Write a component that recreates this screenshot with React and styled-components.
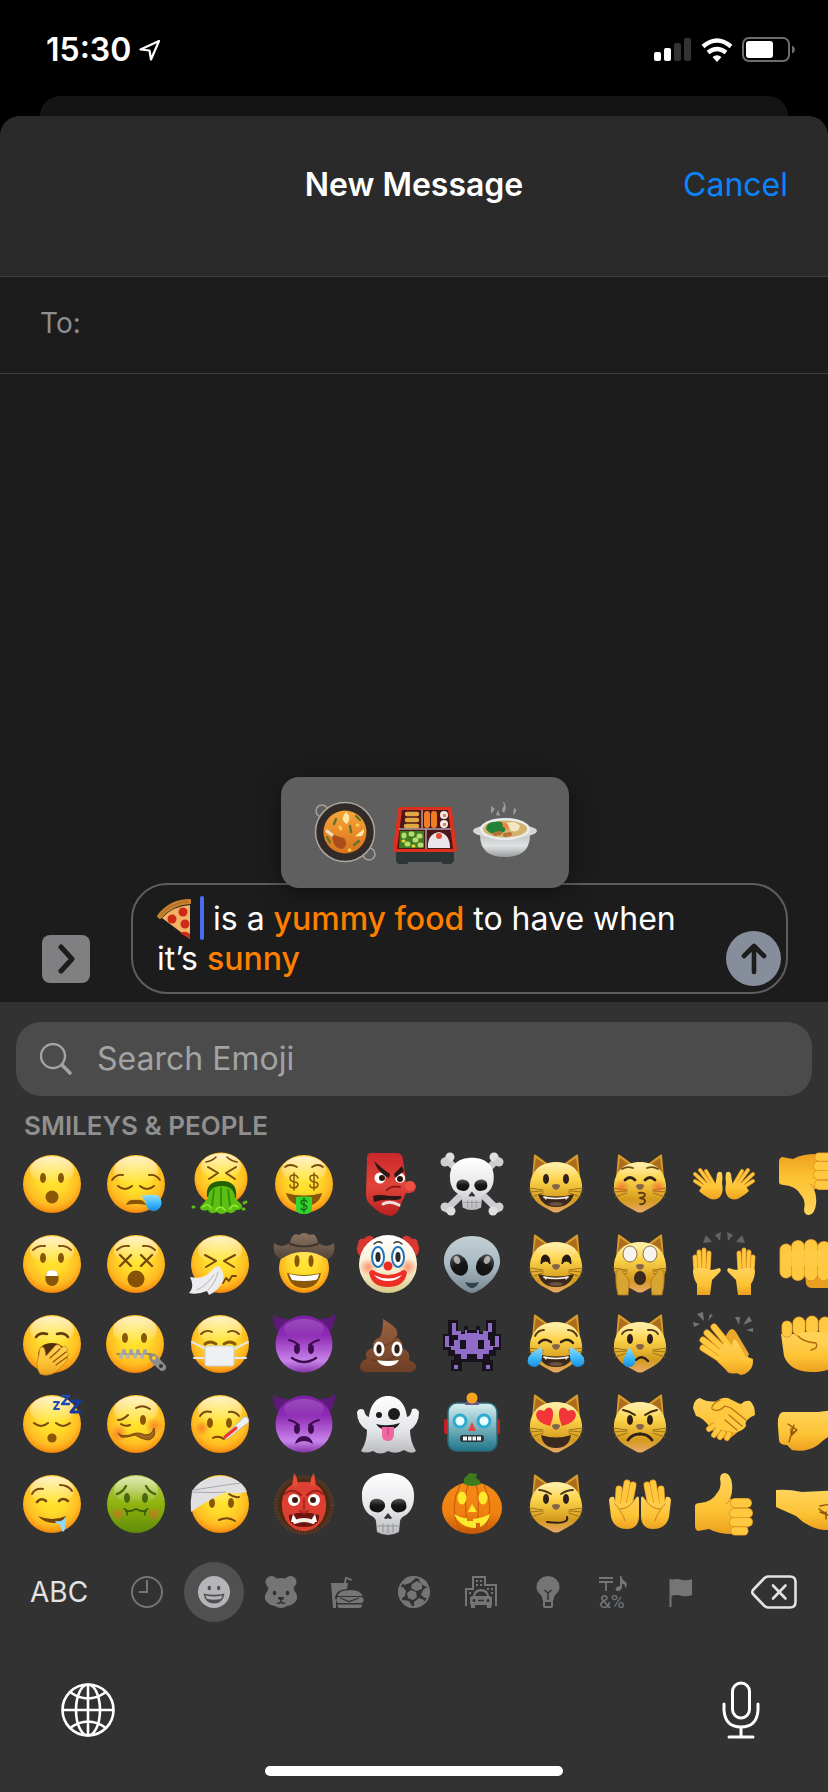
import { useState } from "react";
import styled, { createGlobalStyle } from "styled-components";

/*
  * Estilos globales
*/
const GlobalStyle = createGlobalStyle`
  :root {
    --sheet-color: #1c1c1c;
    --bar-color: #2a2a2a;
    --keyboard-color: #323232;
    --line-color: #3f3f41;
    --muted-color: #757575;
    --blue-color: #0a84ff;
    --orange-color: #ff8000;
    --main-font: Inter, "Liberation Sans", sans-serif;
  }

  * {
    box-sizing: border-box;
  }

  body {
    margin: 0;
    background-color: #000;
    font-family: var(--main-font);
    color: #fff;
  }

  button, input {
    font-family: inherit;
    border: none;
    background: none;
    padding: 0;
    margin: 0;
    color: inherit;
  }

  svg {
    display: block;
  }
`;

/*
  * Trazos compartidos de los emojis
*/
const ink = "#77480b";

const Line = ({ d, w = 2, c = ink }) => (
  <path d={d} fill="none" stroke={c} strokeWidth={w} strokeLinecap="round" strokeLinejoin="round" />
);

const Mirror = ({ children }) => (
  <>
    {children}
    <g transform="matrix(-1 0 0 1 64 0)">{children}</g>
  </>
);

// Dedo o brazo: un trazo grueso con un borde más oscuro
const Limb = ({ d, w = 6 }) => (
  <>
    <Line d={d} w={w} c="#dd9220" />
    <Line d={d} w={w - 1.4} c="#ffc93f" />
  </>
);

const Face = ({ fill = "url(#yellow)", cx = 32, cy = 32, r = 29, shine = 0.8 }) => (
  <>
    <circle cx={cx} cy={cy} r={r} fill={fill} />
    <ellipse cx={cx} cy={cy - r * 0.48} rx={r * 0.76} ry={r * 0.48} fill="url(#shine)" opacity={shine} />
  </>
);

const Eyes = ({ a = 23, b = 41, y = 26, rx = 3, ry = 5, c = "#8a5708" }) => (
  <>
    <ellipse cx={a} cy={y} rx={rx} ry={ry} fill={c} />
    <ellipse cx={b} cy={y} rx={rx} ry={ry} fill={c} />
  </>
);

const Brows = ({ y = 16 }) => (
  <Mirror>
    <Line d={`M13 ${y + 3} Q18 ${y - 2} 25 ${y - 1}`} w={1.8} />
  </Mirror>
);

const Squint = ({ y = 30 }) => (
  <Mirror>
    <Line d={`M17 ${y - 6} L28 ${y} L18 ${y + 6}`} />
  </Mirror>
);

const ClosedEyes = ({ y = 31 }) => (
  <Mirror>
    <Line d={`M14 ${y} Q21 ${y + 6} 28 ${y}`} />
  </Mirror>
);

const Tear = ({ x, y }) => (
  <path d={`M${x} ${y} C${x + 5} ${y + 7} ${x + 7} ${y + 12} ${x + 6} ${y + 16} A6.5 6.5 0 0 1 ${x - 6} ${y + 16} C${x - 6} ${y + 11} ${x - 2} ${y + 6} ${x} ${y}Z`} fill="url(#water)" />
);

const Cat = ({ children }) => (
  <>
    <Mirror>
      <path d="M8 27 L10 3 Q10 2 12 3 L27 14Z" fill="#d69b2b" />
      <path d="M10 20 L12 6 L22 13Z" fill="#ad6b1c" />
    </Mirror>
    <path d="M32 10 C47 10 57 19 58 33 C59 43 52 51 44 55 L35 60 Q32 61 29 60 L20 55 C12 51 5 43 6 33 C7 19 17 10 32 10Z" fill="url(#cat)" />
    <ellipse cx="32" cy="19" rx="20" ry="8" fill="url(#shine)" opacity="0.35" />
    <Mirror>
      <Line d="M5 36 L19 38 M5 40 L19 39 M7 45 L19 41" w={0.8} c="#8d6514" />
    </Mirror>
    {children}
    <path d="M28 33 Q32 31 36 33 Q36 37 32 38 Q28 37 28 33Z" fill="#86654a" />
  </>
);

const CatGrin = () => (
  <>
    <path d="M14 42 Q32 47 50 42 Q46 55 32 55 Q18 55 14 42Z" fill="#3b281e" />
    <path d="M19 44.5 L23 45.5 L22 48Z M45 44.5 L41 45.5 L42 48Z" fill="#fff" />
    <Line d="M20 45 Q32 48 44 45" w={1.6} c="#fff3e4" />
    <path d="M24 52 Q32 48 40 52 Q32 56 24 52Z" fill="#6d5145" />
  </>
);

const Imp = ({ children }) => (
  <>
    <Mirror>
      <path d="M1 1 Q2 7 13 6 L18 10 L8 22 Q0 14 1 1Z" fill="#5d1a78" />
    </Mirror>
    <circle cx="32" cy="32" r="28.5" fill="url(#purple)" />
    <ellipse cx="32" cy="17" rx="20" ry="10" fill="url(#shine)" opacity="0.2" />
    <Eyes a={25} b={39} y={37} c="#3c0b50" />
    <Mirror>
      <Line d="M17 28 Q22 29 27 33" w={1.8} c="#3c0b50" />
    </Mirror>
    {children}
  </>
);

const Skull = () => (
  <>
    <path d="M32 1 C49 1 59 11 58 25 C58 33 55 39 50 43 Q45 45 44 49 L43 60 Q32 66 21 60 L20 49 Q19 45 14 43 C9 39 6 33 6 25 C5 11 15 1 32 1Z" fill="url(#bone)" />
    <Mirror>
      <path d="M14 31 Q16 26 23 27 Q30 29 29 35 Q26 42 19 40 Q12 39 14 31Z" fill="url(#hole)" />
    </Mirror>
    <path d="M32 41 L36 46 Q34 48 32 46 Q30 48 28 46Z" fill="#333" />
    <Line d="M22 54 H42 M27 52 V60 M32 52 V61 M37 52 V60" w={1} c="#929396" />
  </>
);

const Rays = () => (
  <path d="M11 11 L14 3 L20 10Z M23 3 L29 0 L28 9Z M41 3 L35 0 L36 9Z M53 11 L50 3 L44 10Z" fill="#646464" />
);

const ThumbUp = () => (
  <>
    <path d="M3 34 Q3 31 8 31 Q20 30 25 21 Q30 15 28 7 Q28 1 33 1 Q39 2 40 12 Q41 20 38 27 L52 28 L56 58 L40 62 Q26 62 17 57 L6 59 Q3 58 3 54 Z" fill="url(#hand)" />
    <Limb d="M43 31 H55" w={10} />
    <Limb d="M42 41 H56" w={10} />
    <Limb d="M42 50 H56" w={10} />
    <Limb d="M43 59 H52" w={9} />
    <Line d="M38 27 Q37 31 34 32" w={1} c="#d8901f" />
  </>
);

/*
  * Dibujos
*/
const drawings = {
  "hushed face": (
    <>
      <Face />
      <Eyes />
      <circle cx="32" cy="45" r="6.5" fill="#8a5708" />
    </>
  ),
  "astonished face": (
    <>
      <Face />
      <Brows y={15} />
      <Eyes />
      <rect x="25.5" y="38" width="13" height="16" rx="6.5" fill="#8a5708" />
      <path d="M26 44 Q26 38 32 38 Q38 38 38 44Z" fill="#fff" />
    </>
  ),
  "yawning face": (
    <>
      <Face />
      <Mirror>
        <Line d="M16 25 Q20 20 27 22" w={2.6} c="#643d0b" />
      </Mirror>
      <path d="M18 45 Q18 31 32 31 Q45 31 45 43 L36 55 L20 53Z" fill="#51310c" />
      <path d="M20 62 Q15 53 18 47 L20 36 Q24 33 25 39 L26 44 L36 33 Q41 32 41 36 L45 34 Q49 36 47 40 Q50 42 47 45 Q49 48 45 51 L36 60 Q28 65 20 62Z" fill="url(#hand)" stroke="#c47d16" strokeWidth="0.8" />
      <Line d="M30 46 L40 37 M33 50 L46 40 M36 53 L47 45" w={1.2} c="#8f530d" />
    </>
  ),
  "sleeping face": (
    <>
      <Face />
      <ClosedEyes y={31} />
      <circle cx="32" cy="46" r="4.6" fill="#8a5708" />
      <Line d="M34 10 H39 L34 17 H39" w={2} c="#1d49b8" />
      <Line d="M42 4 H49 L42 12 H49" w={2.4} c="#1d49b8" />
      <Line d="M51 9 H60 L51 20 H60" w={3} c="#1639a4" />
    </>
  ),
  "drooling face": (
    <>
      <Face />
      <Line d="M12 22 Q15 16 23 17 M40 13 Q48 13 52 19" />
      <Line d="M17 30 Q21 25 26 29 M39 29 Q43 25 48 29" w={2.6} />
      <path d="M18 44 Q32 50 46 44 Q44 51 34 51 Q24 51 18 44Z" fill="#74440a" />
      <path d="M35 49 Q44 50 45 45 Q46 51 45 57 Q43 63 41 56 L40 52 L37 52Z" fill="#8ddcff" />
    </>
  ),
  "sleepy face": (
    <>
      <Face />
      <Mirror>
        <Line d="M8 28 Q12 22 19 23" w={1.8} />
      </Mirror>
      <ClosedEyes y={34} />
      <path d="M22 53 Q24 47 32 48 Q40 47 42 53 Q32 51 22 53Z" fill="#8a5708" />
      <path d="M37 44 Q46 42 53 43 Q59 47 57 54 Q54 60 48 59 Q42 57 42 51 Q41 47 37 44Z" fill="url(#water)" />
    </>
  ),
  "dizzy face": (
    <>
      <Face />
      <Brows y={15} />
      <Mirror>
        <Line d="M16 23 L27 34 M27 23 L16 34" w={2.4} />
      </Mirror>
      <circle cx="32" cy="47" r="8.5" fill="#855208" />
    </>
  ),
  "zipper-mouth face": (
    <>
      <Face cx={31} />
      <Eyes a={21} b={40} />
      <Line d="M13 42 H47" w={1.4} c="#7c6d53" />
      <Line d="M17 45 V43 M24 45 V43 M31 45 V43 M38 45 V43" w={4} c="#b3b3b3" />
      <Line d="M20 39 V41 M27 39 V41 M34 39 V41 M41 39 V41" w={4} c="#a2a2a2" />
      <path d="M45 43 Q50 39 54 45 L62 54 Q63 59 57 59 L49 52 Q44 47 45 43Z" fill="#8d8d8d" />
      <circle cx="50" cy="46" r="2" fill="#ffc91f" />
      <circle cx="57" cy="54" r="2" fill="#333" />
    </>
  ),
  "woozy face": (
    <>
      <Face />
      <circle cx="15" cy="41" r="9" fill="url(#blush)" />
      <circle cx="50" cy="34" r="9" fill="url(#blush)" />
      <Line d="M14 28 Q19 28 24 23 M32 16 Q39 12 46 17 M17 32 Q21 35 26 33" />
      <ellipse cx="39" cy="28" rx="3" ry="5" fill="#8a5708" />
      <path d="M14 41 Q17 45 26 43 Q34 39 41 43 Q48 43 50 36 Q53 46 44 48 Q37 47 31 43 Q22 46 17 45Z" fill="#a5651a" stroke={ink} />
    </>
  ),
  "nauseated face": (
    <>
      <Face fill="url(#green)" shine={0.6} />
      <circle cx="14" cy="42" r="7" fill="url(#blush)" />
      <circle cx="50" cy="42" r="7" fill="url(#blush)" />
      <Mirror>
        <Line d="M13 22 Q19 20 22 14" c="#4b6a0c" w={2.4} />
        <Line d="M20 37 Q24 37 23 43" c="#3d5a0a" w={1.6} />
      </Mirror>
      <Eyes y={26} c="#47680c" />
      <Line d="M22 39 Q27 40 32 37 Q37 40 42 39" c="#3d5a0a" w={2} />
    </>
  ),
  "vomiting face": (
    <>
      <Face cx={33} cy={27} r={26.5} />
      <Line d="M18 10 Q24 9 28 5 M39 5 Q43 9 49 10" w={1.6} />
      <Line d="M20 15 L30 21 L21 27 M48 15 L38 21 L47 27" />
      <path d="M19 45 Q17 29 34 29 Q50 29 48 46Z" fill="#226105" />
      <path d="M20 46 Q21 34 34 34 Q46 34 47 46 L54 53 Q55 58 48 58 Q45 63 39 60 Q33 64 29 60 Q22 63 20 58 Q12 60 12 55Z" fill="#5cbf12" />
      <Line d="M26 38 L24 53 M33 36 V55 M40 38 L42 53" w={2} c="#379208" />
      <Line d="M15 55 Q20 50 23 56 M28 58 Q32 52 37 58 M42 57 Q45 51 50 55" w={1.6} c="#93ec2d" />
      <Line d="M5 55 L6 55 M56 51 L58 50 M55 57 H56" w={3} c="#5cbf12" />
    </>
  ),
  "sneezing face": (
    <>
      <Face />
      <Squint y={29} />
      <Line d="M35 51 L38 46 L41 49 L44 44 L48 44" w={1.8} />
      <path d="M1 61 Q7 55 2 45 Q15 48 22 40 Q28 33 31 34 Q37 40 35 49 Q30 59 21 63 L19 59 Q9 63 1 61Z" fill="#ececee" />
      <Line d="M9 58 Q18 54 26 43 M20 58 Q28 50 30 40" w={1} c="#b4b4b8" />
    </>
  ),
  "face with medical mask": (
    <>
      <Face />
      <Mirror>
        <Line d="M13 22 Q18 17 24 20" w={1.8} />
        <Line d="M17 32 Q22 28 28 32" w={3} c="#8a5708" />
        <Line d="M18 37 L4 30 M18 46 L6 46" w={2} c="#e4e6ea" />
      </Mirror>
      <rect x="17" y="34" width="29" height="20" rx="2" fill="#eef0f4" stroke="#c9ccd2" />
    </>
  ),
  "face with thermometer": (
    <>
      <Face />
      <circle cx="14" cy="36" r="8" fill="url(#blush)" />
      <Line d="M12 24 Q16 18 23 20 M41 20 Q47 19 51 24" />
      <Eyes a={22} b={41} y={31} />
      <Line d="M25 46 Q30 43 36 47" />
      <path d="M35 45 L56 25 Q60 24 61 29 Q60 32 57 33 L39 47Z" fill="#eef0f3" stroke="#aeb1b6" strokeWidth="0.8" />
      <Line d="M37 45 L48 36" w={3} c="#f1342c" />
    </>
  ),
  "face with head-bandage": (
    <>
      <Face />
      <Line d="M41 22 Q46 26 51 25" />
      <Eyes a={24} b={43} y={31} />
      <Line d="M31 48 Q40 44 47 49" />
      <path d="M4 19 Q12 7 26 5 Q36 3 46 7 Q56 11 59 20 Q49 22 38 20 Q20 28 3 40 Q2 30 4 19Z" fill="#e0e0e2" />
      <path d="M6 18 Q30 14 52 11 M4 20 Q25 21 38 20" stroke="#a9a9ad" fill="none" />
    </>
  ),
  "money-mouth face": (
    <>
      <Face />
      <Line d="M13 15 Q18 11 25 15 M40 15 Q46 11 51 15" w={1.8} />
      <Line d="M26 26 Q25 23 22 23 Q18 23 18 26 Q18 29 22 30 Q26 30 26 33 Q25 36 22 36 Q18 36 18 33 M22 21 V38" w={1.5} c="#8a5708" />
      <Line d="M46 26 Q45 23 42 23 Q38 23 38 26 Q38 29 42 30 Q46 30 46 33 Q45 36 42 36 Q38 36 38 33 M42 21 V38" w={1.5} c="#8a5708" />
      <path d="M14 41 Q32 46 50 41 Q47 54 32 54 Q18 54 14 41Z" fill="#8a5708" />
      <path d="M24 45 Q32 44 40 45 V57 Q40 62 32 62 Q24 62 24 57Z" fill="#34d52e" />
      <Line d="M35 50 Q34 48 32 48 Q29 48 29 51 Q29 52 32 53 Q35 53 35 56 Q34 58 32 58 Q29 58 29 56 M32 46 V60" w={1.3} c="#116b10" />
    </>
  ),
  "cowboy hat face": (
    <>
      <Face cy={36} r={25} shine={0.3} />
      <path d="M2 11 Q9 17 18 11 Q20 0 27 3 Q32 -1 38 3 Q44 0 46 11 Q55 17 62 11 Q64 25 55 27 Q43 19 32 20 Q21 19 9 27 Q0 24 2 11Z" fill="url(#hat)" />
      <Line d="M18 12 Q32 17 46 12" w={2} c="#40352a" />
      <Eyes a={25} b={39} y={29} rx={2.6} ry={6} />
      <path d="M15 41 Q32 45 49 41 Q46 56 32 56 Q18 56 15 41Z" fill="#8a5708" />
      <path d="M17 42 Q32 46 47 42 Q46 47 44 48 Q32 50 20 48Z" fill="#fff" />
    </>
  ),
  "smiling face with horns": (
    <Imp>
      <Line d="M20 46 Q32 54 44 46" w={2.4} c="#3c0b50" />
    </Imp>
  ),
  "angry face with horns": (
    <Imp>
      <path d="M23 52 Q25 44 32 44 Q39 44 41 52 Q32 46 23 52Z" fill="#3c0b50" />
    </Imp>
  ),
  ogre: (
    <>
      <circle cx="32" cy="33" r="28" fill="#4a2a17" stroke="#5a3823" strokeWidth="4" strokeDasharray="2 1" />
      <path d="M32 10 C46 9 55 20 54 35 C53 50 43 59 32 59 C21 59 11 50 10 35 C9 20 18 9 32 10Z" fill="#dd3f31" />
      <Mirror>
        <path d="M20 14 L22 1 Q26 6 26 14Z" fill="#e54c3a" />
        <circle cx="22" cy="28" r="6" fill="#fff" />
        <circle cx="23" cy="28" r="3" fill="#3a1c10" />
        <Line d="M13 22 Q20 15 29 23" w={2} c="#982018" />
      </Mirror>
      <path d="M17 43 Q32 38 47 43 Q48 55 32 55 Q16 55 17 43Z" fill="#6d140f" />
      <Line d="M23 50 Q32 46 41 50" w={4} c="#f6eee4" />
      <path d="M19 50 L21 42 L26 50Z M45 50 L43 42 L38 50Z" fill="#fff" />
      <Line d="M28 39 Q32 42 36 39 M32 27 V37" w={2.4} c="#b02a22" />
    </>
  ),
  goblin: (
    <>
      <path d="M11 5 Q12 0 18 1 L40 1 Q47 1 47 8 L50 30 Q59 27 60 35 Q59 42 50 41 L44 54 Q42 62 35 64 Q24 63 16 54 Q10 50 10 42Z" fill="url(#red)" />
      <circle cx="24" cy="26" r="5.5" fill="#fff" />
      <circle cx="44" cy="26" r="5" fill="#fff" />
      <circle cx="26" cy="26" r="3" fill="#2b140c" />
      <circle cx="44" cy="27" r="3" fill="#2b140c" />
      <path d="M18 9 Q24 15 34 22 L33 26 Q22 21 18 9Z M38 22 L46 14 L48 19 L39 26Z" fill="#2a1816" />
      <path d="M17 44 Q24 42 33 44 L45 44 Q47 48 38 48 Q26 47 18 50Z" fill="#2a1816" />
      <Line d="M27 52 Q34 48 43 53" w={3} c="#f3dfd8" />
      <ellipse cx="54" cy="34" rx="5" ry="5" fill="#ec5045" />
      <Line d="M31 38 Q36 33 44 35" w={2} c="#8f1a18" />
    </>
  ),
  clown: (
    <>
      <Mirror>
        <path d="M4 24 Q-1 19 2 12 Q2 6 8 7 Q13 1 18 6 L10 22Z" fill="#d93732" />
      </Mirror>
      <circle cx="32" cy="32" r="29" fill="url(#cream)" />
      <circle cx="12" cy="35" r="9" fill="url(#blush)" />
      <circle cx="52" cy="35" r="9" fill="url(#blush)" />
      <Mirror>
        <ellipse cx="22" cy="25" rx="6" ry="10" fill="#fff" stroke="#1d74bd" strokeWidth="2" />
        <ellipse cx="22" cy="25" rx="2.6" ry="5" fill="#2b2b2b" />
        <Line d="M18 12 Q22 8 26 11" w={1.4} c="#333" />
      </Mirror>
      <path d="M13 40 Q16 36 20 40 Q32 46 44 40 Q48 36 51 40 Q49 55 32 55 Q15 55 13 40Z" fill="#ed2f26" />
      <path d="M18 43 Q32 50 46 43 Q41 49 32 49 Q23 49 18 43Z" fill="#fff" />
      <circle cx="32" cy="34" r="4.5" fill="#eb2c23" />
    </>
  ),
  "pile of poo": (
    <>
      <path d="M27 7 Q37 13 40 17 Q43 22 40 25 Q48 29 46 36 Q55 39 53 48 Q61 51 60 56 Q58 61 50 60 H14 Q4 61 4 55 Q4 49 11 47 Q7 39 17 36 Q15 29 24 25 Q27 20 27 7Z" fill="url(#brown)" />
      <Line d="M20 34 Q34 35 41 25 M16 48 Q38 51 47 38" w={1.2} c="#623923" />
      <Mirror>
        <ellipse cx="23" cy="37" rx="5.5" ry="7.5" fill="#fff" />
        <ellipse cx="23" cy="37" rx="2.6" ry="4.5" fill="#2d1d15" />
      </Mirror>
      <path d="M21 48 Q32 50 43 48 Q40 54 32 54 Q24 54 21 48Z" fill="#fff" />
    </>
  ),
  ghost: (
    <>
      <path d="M32 4 C44 4 50 14 51 25 Q55 24 56 17 Q61 15 63 20 Q63 32 54 38 Q54 49 60 59 Q56 63 48 58 Q40 63 32 59 Q24 64 17 59 Q9 62 5 59 Q11 50 11 38 Q1 32 1 20 Q3 15 8 18 Q9 24 13 25 C14 14 20 4 32 4Z" fill="url(#bone)" />
      <circle cx="23" cy="23" r="3" fill="#1d1d1d" />
      <circle cx="38" cy="22" r="6" fill="#1d1d1d" />
      <path d="M20 32 Q32 35 44 31 Q40 38 32 38 Q24 38 20 32Z" fill="#1d1d1d" />
      <path d="M26 35 H38 V43 Q37 49 32 49 Q26 49 26 43Z" fill="#ef66a0" />
      <Line d="M32 36 V43" w={1} c="#c23b77" />
    </>
  ),
  skull: <Skull />,
  "skull and crossbones": (
    <>
      <Line d="M7 8 L57 57 M57 8 L7 57" w={7} c="#cbcccf" />
      <Mirror>
        <circle cx="10" cy="5" r="4.5" fill="#dedfe2" />
        <circle cx="5" cy="10" r="4.5" fill="#cfd0d3" />
        <circle cx="5" cy="55" r="4.5" fill="#cfd0d3" />
        <circle cx="11" cy="59" r="4.5" fill="#dedfe2" />
      </Mirror>
      <g transform="translate(5 5) scale(0.84)">
        <Skull />
      </g>
    </>
  ),
  alien: (
    <>
      <path d="M32 4 C49 4 61 16 60 31 C58 46 43 57 36 60 Q32 62 28 60 C21 57 6 46 4 31 C3 16 15 4 32 4Z" fill="url(#alien)" />
      <Mirror>
        <ellipse cx="19" cy="33" rx="8.5" ry="11" fill="url(#hole)" transform="rotate(-25 19 33)" />
        <ellipse cx="17" cy="28" rx="3" ry="4" fill="#fff" opacity="0.6" transform="rotate(-25 17 28)" />
      </Mirror>
      <path d="M25 50 Q32 52 39 50 Q36 56 32 56 Q28 56 25 50Z" fill="#30414a" />
    </>
  ),
  "alien monster": (
    <g shapeRendering="crispEdges">
      <path d="M8 8 H18 V20 H24 V14 H28 V18 H36 V14 H40 V20 H46 V8 H56 V22 H61 V38 H56 V44 H50 V48 H53 V59 H42 V50 H22 V59 H11 V48 H14 V44 H8 V38 H3 V22 H8Z" fill="#17121c" />
      <path d="M12 11 H16 V19 H21 V22 H25 V18 H27 V21 H37 V18 H39 V22 H43 V19 H48 V11 H52 V20 H48 V28 H50 V34 H55 V24 H59 V35 H53 V38 H49 V42 H43 V47 H37 V42 H27 V47 H21 V42 H15 V38 H11 V35 H5 V24 H9 V34 H14 V28 H18 V23 H12Z" fill="#8f6cc8" />
      <path d="M20 28 H26 V37 H20Z M38 28 H44 V37 H38Z" fill="#17121c" />
      <path d="M14 53 H18 V57 H14Z M46 53 H50 V57 H46Z" fill="#8f6cc8" />
    </g>
  ),
  robot: (
    <>
      <rect x="4" y="27" width="56" height="15" rx="2" fill="#c81f25" />
      <rect x="8" y="11" width="49" height="48" rx="9" fill="url(#steel)" stroke="#2a6b7a" strokeWidth="1.5" />
      <path d="M25 13 Q25 8 32 8 Q39 8 39 13Z" fill="#6a568e" />
      <circle cx="32" cy="6" r="5.5" fill="#f8a319" />
      <Mirror>
        <circle cx="20" cy="29" r="6" fill="#e9ffff" stroke="#2cabd3" strokeWidth="3" />
      </Mirror>
      <path d="M32 30 L36 39 H28Z" fill="#e3483e" />
      <rect x="20" y="43" width="24" height="7" rx="3" fill="#29333a" />
      <path d="M23 44.5 H27 V48.5 H23Z M28 44.5 H31.500 V48.5 H28Z M32.500 44.5 H36 V48.5 H32.500Z M37 44.5 H41 V48.5 H37Z" fill="#f4f7f8" />
    </>
  ),
  "jack-o-lantern": (
    <>
      <ellipse cx="32" cy="36" rx="30" ry="26" fill="url(#pumpkin)" />
      <Line d="M20 13 Q8 36 20 59 M44 13 Q56 36 44 59 M28 12 Q23 26 28 60 M36 12 Q41 26 36 60" w={1} c="#c0590a" />
      <path d="M24 12 Q23 5 27 4 L29 1 L37 2 L36 6 Q40 8 41 12 Q32 16 24 12Z" fill="#3f7c1e" />
      <Eyes a={22} b={43} y={26} rx={4.5} ry={6.5} c="#ffe92e" />
      <path d="M32 32 L37 40 H28Z" fill="#ffe92e" />
      <path d="M14 42 Q23 47 27 46 V49 H33 V47 Q43 46 50 42 Q48 51 40 55 V51 H36 V56 Q20 56 14 42Z" fill="#ffe92e" />
    </>
  ),
  "grinning cat": (
    <Cat>
      <Eyes a={22} b={42} y={27} c="#2e2118" />
      <CatGrin />
    </Cat>
  ),
  "grinning cat with smiling eyes": (
    <Cat>
      <Mirror>
        <path d="M17 32 Q17 23 21 23 Q26 23 26 32 Q22 26 17 32Z" fill="#241a12" stroke="#241a12" />
      </Mirror>
      <CatGrin />
    </Cat>
  ),
  "cat with tears of joy": (
    <Cat>
      <Mirror>
        <Line d="M11 24 Q14 18 20 18" w={1.8} c="#4d3917" />
        <Line d="M15 31 Q20 25 27 30" w={2.4} c="#2e2118" />
      </Mirror>
      <CatGrin />
      <path d="M18 35 Q20 54 10 55 Q2 54 4 46 Q7 40 18 35Z M46 35 Q44 54 54 55 Q62 54 60 46 Q57 40 46 35Z" fill="url(#water)" />
    </Cat>
  ),
  "smiling cat with heart-eyes": (
    <Cat>
      <path d="M17 43 Q32 48 47 43 Q45 56 32 56 Q19 56 17 43Z" fill="#3b281e" />
      <Mirror>
        <path d="M26 34 Q13 31 12 23 Q13 16 20 19 Q24 13 28 17 Q31 22 26 34Z" fill="#f2353a" />
      </Mirror>
    </Cat>
  ),
  "cat with wry smile": (
    <Cat>
      <Eyes a={22} b={42} y={27} c="#2e2118" />
      <Line d="M15 18 Q20 18 27 22 M37 22 Q43 18 49 18" w={1.8} c="#4d3917" />
      <Line d="M23 50 Q37 52 42 49 Q44 47 43 45" w={2} c="#2e2118" />
    </Cat>
  ),
  "kissing cat": (
    <Cat>
      <circle cx="14" cy="35" r="8" fill="url(#blush)" />
      <circle cx="50" cy="35" r="8" fill="url(#blush)" />
      <Mirror>
        <Line d="M14 17 Q19 14 25 16" w={1.8} c="#6a4b16" />
        <Line d="M17 28 Q22 23 27 28" w={2.8} c="#2e2118" />
      </Mirror>
      <Line d="M31 41 Q37 40 37 43 Q36 46 32 46 Q38 47 37 50 Q35 53 32 52" w={1.8} c="#5a3a12" />
    </Cat>
  ),
  "weary cat": (
    <Cat>
      <Mirror>
        <ellipse cx="22" cy="22" rx="7" ry="8" fill="#f8f4ee" stroke="#8c7440" />
        <path d="M8 41 Q8 37 12 37 Q15 38 17 43 Q22 47 21 54 L20 63 H10 Q7 52 8 41Z" fill="#d9a532" stroke="#a97513" strokeWidth="0.8" />
      </Mirror>
      <ellipse cx="32" cy="46" rx="6" ry="7" fill="#3b281e" />
    </Cat>
  ),
  "crying cat": (
    <Cat>
      <Eyes a={22} b={42} y={27} c="#2e2118" />
      <Mirror>
        <Line d="M14 22 Q17 17 24 18" w={1.8} c="#4d3917" />
      </Mirror>
      <Line d="M28 48 Q34 42 40 49" w={2.4} c="#2e2118" />
      <Tear x={21} y={35} />
    </Cat>
  ),
  "pouting cat": (
    <Cat>
      <Eyes a={22} b={42} y={28} c="#2e2118" />
      <Mirror>
        <Line d="M15 18 Q21 19 27 23" w={2} c="#3c2a12" />
        <Line d="M20 48 Q24 42 32 42" w={2.8} c="#2e2118" />
      </Mirror>
    </Cat>
  ),
  "palms up together": (
    <Mirror>
      <Limb d="M10 34 L11 17" w={7} />
      <Limb d="M15 34 L19 11" w={7} />
      <Limb d="M21 34 L25 13" w={7} />
      <path d="M1 28 Q2 24 6 25 L8 32 L25 30 Q31 20 31 28 V43 Q31 57 19 57 Q6 57 3 45Z" fill="url(#hand)" />
      <Line d="M7 32 Q14 39 17 49 M12 37 Q20 37 25 30" w={1} c="#cc811b" />
    </Mirror>
  ),
  "open hands": (
    <Mirror>
      <Limb d="M20 40 L3 29" w={4} />
      <Limb d="M20 38 L3 22" w={4} />
      <Limb d="M22 37 L8 18" w={4} />
      <Limb d="M24 36 L14 19" w={4} />
      <path d="M11 33 Q18 28 23 33 Q24 30 25 22 Q27 18 30 21 Q31 26 30 31 Q32 40 28 45 Q22 50 15 45 Q10 42 7 39Z" fill="url(#hand)" />
    </Mirror>
  ),
  "raising hands": (
    <>
      <Rays />
      <Mirror>
        <Limb d="M4 41 L3 25" w={5} />
        <Limb d="M8 40 L7 20" w={5} />
        <Limb d="M12 40 L12 18" w={5} />
        <Limb d="M16 40 L17 21" w={5} />
        <path d="M1 38 Q8 34 18 38 Q23 38 27 36 Q30 37 28 40 L20 48 L18 63 H5 V52 Q1 46 1 38Z" fill="url(#hand)" />
      </Mirror>
    </>
  ),
  "clapping hands": (
    <>
      <path d="M1 10 L8 12 L2 15Z M5 2 L11 0 L12 9Z M18 2 L21 3 L16 9Z M43 5 L48 5 L47 13Z M57 4 L60 9 L51 13Z M54 18 L61 16 V20Z" fill="#747474" />
      <path d="M36 20 Q40 14 44 20 L57 42 L50 60 Q37 64 34 58 L22 46Z" fill="#eca82b" />
      <Limb d="M33 50 L11 36" w={7} />
      <Limb d="M36 47 L11 28" w={7} />
      <Limb d="M39 44 L15 21" w={7} />
      <Limb d="M43 41 L22 15" w={7} />
      <path d="M27 38 L33 30 L40 37 Q40 25 44 28 Q48 33 53 44 L61 47 Q62 57 53 62 L49 63 Q44 60 37 59 L26 50Z" fill="url(#hand)" />
    </>
  ),
  handshake: (
    <>
      <path d="M1 16 Q2 7 8 6 Q16 11 26 9 L49 12 Q53 8 58 9 Q63 13 63 23 Q53 27 53 34 L36 48 Q22 43 17 34 Q10 25 4 24Z" fill="url(#hand)" />
      <Limb d="M21 34 L17 37" w={6} />
      <Limb d="M26 38 L22 43" w={6} />
      <Limb d="M31 41 L28 45" w={6} />
      <Limb d="M37 42 L35 46" w={6} />
      <path d="M20 17 Q25 4 36 6 L50 13 L54 34 Q50 40 42 40 L24 37 L20 26Z" fill="#ffc93f" />
      <Line d="M28 8 Q19 12 20 17 Q26 21 33 14 L39 16 L54 28 M37 23 L50 34 M33 28 L45 38" w={1.2} c="#b8720f" />
    </>
  ),
  "thumbs up": <ThumbUp />,
  "thumbs down": (
    <g transform="matrix(1 0 0 -1 0 64)">
      <ThumbUp />
    </g>
  ),
  "oncoming fist": (
    <>
      <path d="M30 44 H60 V56 H36 Q28 56 30 44Z" fill="#e89e20" />
      <Limb d="M10 18 V40" w={13} />
      <Limb d="M22 15 V42" w={14} />
      <Limb d="M35 14 V42" w={14} />
      <Limb d="M48 16 V42" w={14} />
      <Limb d="M60 19 V42" w={12} />
      <path d="M5 21 Q30 15 62 21 V34 H5Z" fill="#ffcb46" opacity="0.8" />
    </>
  ),
  "raised fist": (
    <>
      <path d="M5 22 H62 V50 Q56 60 36 60 Q14 60 8 44Z" fill="url(#hand)" />
      <Limb d="M11 14 V20" w={11} />
      <Limb d="M23 11 V18" w={13} />
      <Limb d="M36 10 V17" w={13} />
      <Limb d="M49 11 V18" w={13} />
      <path d="M21 23 Q24 19 30 20 H58 Q62 28 58 38 L42 32 Q24 31 21 23Z" fill="#ffd052" />
      <Line d="M22 24 Q27 30 40 31 Q43 36 35 38" w={1.4} c="#b0680c" />
    </>
  ),
  "left-facing fist": (
    <>
      <path d="M2 35 Q1 21 7 20 L42 20 L64 17 V38 Q50 45 42 53 Q30 61 16 58 L11 53 Q3 53 3 48Z" fill="url(#hand)" />
      <Line d="M12 32 L21 38 L14 45 M21 38 L16 41 M15 36 V44 M18 33 L13 50" w={1.2} c="#8e530a" />
    </>
  ),
  "right-facing fist": (
    <>
      <path d="M0 18 Q12 17 26 20 L64 18 V58 H48 Q32 56 20 44 L0 35Z" fill="url(#hand)" />
      <Line d="M44 34 Q56 31 62 34 M43 37 L52 43 L44 40 M50 40 V47 M54 37 L53 46" w={1.4} c="#8e530a" />
    </>
  ),
  "shallow pan of food": (
    <>
      <circle cx="9" cy="11" r="6" fill="none" stroke="#a8a29a" strokeWidth="1.5" />
      <circle cx="56" cy="54" r="6" fill="none" stroke="#a8a29a" strokeWidth="1.5" />
      <circle cx="32" cy="32" r="29.5" fill="#322a26" stroke="#aaa59f" strokeWidth="1.5" />
      <circle cx="32" cy="32" r="21.5" fill="url(#curry)" />
      <path d="M33 12 Q39 17 34 24 Q26 20 33 12Z M42 36 L51 29 Q52 38 42 36Z" fill="#ffe9a2" />
      <Line d="M23 19 L21 24 M43 16 L47 20 M14 37 L17 42 M41 45 L46 41 M37 26 L38 32" w={2.4} c="#61752a" />
      <path d="M18 33 Q22 36 31 38 Q36 44 30 49 Q20 49 19 36Z" fill="#aa4f1b" />
      <Line d="M14 31 L19 35" w={3} c="#f5dcc2" />
      <Line d="M27 27 L28 29 M44 25 H45 M36 50 H37" w={3} c="#ffc65b" />
    </>
  ),
  "bento box": (
    <>
      <path d="M3 51 H61 V61 L58 64 H50 L48 62 H16 L14 64 H5 L3 61Z" fill="#2d3637" />
      <path d="M7 7 Q5 7 5 10 L0 49 Q0 52 3 52 H61 Q64 52 64 49 L59 10 Q59 7 57 7Z" fill="#dc321d" />
      <path d="M9 10 H55 L60 49 H4Z" fill="#4d1719" />
      <path d="M29 10 V28 M6 29 H58 M33 29 V49" stroke="#a9a1a8" strokeWidth="1.5" />
      <Line d="M14 14 H24 M14 20 H24 M13 26 H24" w={4.5} c="#e0a742" />
      <Line d="M34 14 V25 M41 14 V25" w={6} c="#f27b24" />
      <circle cx="51" cy="15" r="4" fill="#efece5" />
      <circle cx="51" cy="24" r="4" fill="#efece5" />
      <path d="M50 14 H53 V17 H50Z M50 23 H53 V26 H50Z" fill="#ef7e57" />
      <path d="M7 31 H31 V48 H6Z" fill="#3f7b22" />
      <Line d="M11 35 V36 M18 34 H19 M26 36 H27 M14 44 H15 M22 40 H23 M27 45 H28" w={5} c="#b9dc6d" />
      <Line d="M10 41 H11 M20 46 H21" w={3} c="#f1cd34" />
      <path d="M35 48 Q34 34 46 32 Q57 34 57 48Z" fill="#e8e6ea" />
      <circle cx="46" cy="36" r="3" fill="#eb4b34" />
    </>
  ),
  "pot of food": (
    <>
      <path d="M18 6 L22 9 L18 14Z M30 1 Q35 6 31 13 Q27 10 31 6Z M41 8 Q46 10 40 15Z M25 10 L27 16 L23 15Z" fill="#c4c4c4" opacity="0.6" />
      <path d="M7 35 Q7 57 32 57 Q57 57 57 35Z" fill="url(#bowl)" />
      <ellipse cx="32" cy="31" rx="32" ry="7" fill="#d5d8d9" />
      <ellipse cx="32" cy="29" rx="25" ry="11" fill="#e9ebec" />
      <ellipse cx="32" cy="29" rx="22" ry="8.5" fill="#d3b36b" />
      <path d="M13 29 Q14 21 22 22 Q30 20 32 27 Q34 33 26 33 Q18 36 13 29Z" fill="#24813a" />
      <path d="M29 22 L35 24 L36 30 L30 27Z" fill="#f18136" />
      <path d="M34 23 Q42 20 47 26 Q46 33 38 31Z" fill="#f2e5c5" />
      <Line d="M22 34 L27 33 M32 35 L37 34" w={4} c="#bb7136" />
    </>
  ),
  pizza: (
    <>
      <path d="M1 18 Q13 2 33 2 L33 5 Q15 6 3 20Z" fill="#b26e22" stroke="#c98431" strokeWidth="2" strokeLinejoin="round" />
      <path d="M5 20 Q16 8 33 7 V41Z" fill="#f2b364" />
      <circle cx="26" cy="14" r="4.5" fill="#cf2a18" />
      <circle cx="15" cy="21" r="4.5" fill="#cf2a18" />
      <circle cx="28" cy="26" r="4.5" fill="#cf2a18" />
      <path d="M23 35 Q28 32 33 36 V41Z" fill="#cf2a18" />
    </>
  ),
};

const gradients = {
  shine: [["0", "#fff", 0.95], ["1", "#fff", 0]],
  water: [["0", "#8fe0ff"], ["0.6", "#38b3f5"], ["1", "#1b8be0"]],
  cat: [["0", "#ffe98a"], ["0.35", "#fcd34a"], ["0.75", "#d49a1c"], ["1", "#e8a868"]],
  purple: [["0", "#7f1fa6"], ["0.35", "#8d2bb4"], ["0.8", "#c883ea"], ["1", "#8435a6"]],
  bone: [["0", "#ffffff"], ["0.6", "#e4e5e8"], ["1", "#b9babd"]],
  hole: [["0", "#555"], ["0.5", "#161616"], ["1", "#111"]],
  hand: [["0", "#ffd35c"], ["0.6", "#fdc334"], ["1", "#eda01f"]],
  green: [["0", "#b9cf52"], ["0.5", "#8fb30e"], ["1", "#5f8c08"]],
  hat: [["0", "#8a7560"], ["1", "#54443a"]],
  red: [["0", "#c9282a"], ["0.5", "#e0453b"], ["1", "#b92020"]],
  cream: [["0", "#ffffff"], ["0.6", "#fbeed0"], ["1", "#d9cb88"]],
  brown: [["0", "#9a6240"], ["1", "#6e3f26"]],
  alien: [["0", "#c3d0d6"], ["0.5", "#a9bac2"], ["1", "#76868e"]],
  steel: [["0", "#d9f0f2"], ["0.5", "#7bb4bf"], ["1", "#1f7589"]],
  pumpkin: [["0", "#f58a17"], ["0.6", "#f0800f"], ["1", "#c65a0a"]],
  curry: [["0", "#f7a63a"], ["1", "#d8721a"]],
  bowl: [["0", "#c4c7c8"], ["0.5", "#dfe1e2"], ["1", "#999c9e"]],
};

const GradientSheet = () => (
  <svg width="0" height="0" aria-hidden="true">
    <defs>
      {Object.entries(gradients).map(([id, stops]) => (
        <linearGradient key={id} id={id} x1="0" y1="0" x2="0" y2="1">
          {stops.map(([offset, color, opacity = 1]) => (
            <stop key={offset} offset={offset} stopColor={color} stopOpacity={opacity} />
          ))}
        </linearGradient>
      ))}
      <radialGradient id="yellow" cx="0.5" cy="0.4" r="0.61">
        <stop offset="0" stopColor="#ffe530" />
        <stop offset="0.4" stopColor="#ffdc2a" />
        <stop offset="0.75" stopColor="#ffbd22" />
        <stop offset="0.9" stopColor="#fb9f16" />
        <stop offset="1" stopColor="#e87d0c" />
      </radialGradient>
      <radialGradient id="blush">
        <stop offset="0" stopColor="#f4582b" stopOpacity="0.6" />
        <stop offset="1" stopColor="#f4582b" stopOpacity="0" />
      </radialGradient>
    </defs>
  </svg>
);

const Emoji = ({ name, size = 64 }) => (
  <svg width={size} height={size} viewBox="0 0 64 64" aria-hidden="true">
    {drawings[name]}
  </svg>
);

/*
  * Barra de estado
*/
const StyledStatusBar = styled.div`
  display: flex;
  justify-content: space-between;
  align-items: center;

  height: 96px;
  padding: 4px 32px 0 46px;

  .status-group {
    display: flex;
    align-items: center;
    gap: 8px;
  }

  .status-time {
    font-size: 32px;
    font-weight: 600;
    line-height: 40px;
  }
`;

const StatusBar = () => (
  <StyledStatusBar>
    <div className="status-group">
      <span className="status-time">15:30</span>
      <svg width="22" height="22" viewBox="0 0 22 22" aria-hidden="true">
        <path d="M20 2 L1.5 10.5 L10.5 11.5 L12 20.5Z" fill="none" stroke="#fff" strokeWidth="2.2" strokeLinejoin="round" />
      </svg>
    </div>
    <div className="status-group">
      <svg width="38" height="24" viewBox="0 0 38 24" aria-hidden="true">
        <rect x="0" y="14" width="7" height="9" rx="2" fill="#fff" />
        <rect x="10" y="10" width="7" height="13" rx="2" fill="#fff" />
        <rect x="20" y="5" width="7" height="18" rx="2" fill="#333" />
        <rect x="30" y="0" width="7" height="23" rx="2" fill="#333" />
      </svg>
      <svg width="34" height="24" viewBox="0 0 34 24" aria-hidden="true">
        <path d="M3 8.5 Q17 -3.5 31 8.5" fill="none" stroke="#fff" strokeWidth="4.4" />
        <path d="M8 14.5 Q17 7.5 26 14.5" fill="none" stroke="#fff" strokeWidth="4.4" />
        <path d="M12.5 19 Q17 15.5 21.5 19 L17 24Z" fill="#fff" />
      </svg>
      <svg width="54" height="26" viewBox="0 0 54 26" aria-hidden="true">
        <rect x="1" y="1" width="46" height="23" rx="6" fill="none" stroke="#6d6d6d" strokeWidth="2" />
        <rect x="4" y="4" width="27" height="17" rx="3" fill="#fff" />
        <path d="M50 8.5 Q53 10 53 12.5 Q53 15 50 16.5Z" fill="#6d6d6d" />
      </svg>
    </div>
  </StyledStatusBar>
);

/*
  * Hoja del mensaje
*/
const Screen = styled.div`
  display: flex;
  flex-direction: column;
  min-height: 100vh;
  background-color: #000;
`;

const BackCard = styled.div`
  height: 20px;
  margin: 0 40px;
  border-radius: 20px 20px 0 0;
  background-color: #141414;
`;

const Sheet = styled.main`
  display: flex;
  flex-direction: column;
  flex: 1;
  overflow: hidden;
  border-radius: 20px 20px 0 0;
  background-color: var(--sheet-color);
`;

const SheetHeader = styled.header`
  display: grid;
  grid-template-columns: 1fr auto 1fr;
  padding: 46px 40px 68px;
  border-bottom: 1px solid var(--line-color);
  background-color: var(--bar-color);

  h1 {
    grid-column: 2;
    margin: 0;
    font-size: 32px;
    font-weight: 600;
    line-height: 46px;
  }

  button {
    justify-self: end;
    font-size: 32px;
    line-height: 46px;
    color: var(--blue-color);
  }
`;

const Recipient = styled.label`
  display: flex;
  gap: 12px;
  padding: 24px 40px 28px;
  border-bottom: 1px solid var(--line-color);
  font-size: 28px;
  line-height: 44px;
  color: #8e8e93;

  input {
    flex: 1;
    min-width: 0;
    outline: none;
    font-size: 28px;
    color: #fff;
  }
`;

const Conversation = styled.section`
  flex: 1;
  min-height: 240px;
`;

const Composer = styled.form`
  display: flex;
  align-items: flex-end;
  gap: 41px;
  padding: 0 40px 8px 42px;
`;

const AppsButton = styled.button`
  display: grid;
  place-items: center;
  width: 48px;
  height: 48px;
  margin-bottom: 11px;
  border-radius: 8px;
  background-color: #808082;
`;

const Bubble = styled.div`
  position: relative;
  display: flex;
  align-items: flex-end;
  flex: 1;
  border: 2px solid #5e5e62;
  border-radius: 36px;
`;

const MessageText = styled.div`
  flex: 1;
  padding: 14px 20px 13px 24px;
  outline: none;
  font-size: 32px;
  line-height: 40px;

  svg {
    display: inline-block;
    margin: -4px 0;
    vertical-align: -6px;
  }

  mark {
    background: none;
    font-weight: 500;
    color: var(--orange-color);
  }
`;

const Caret = styled.span`
  display: inline-block;
  width: 4px;
  height: 44px;
  margin: -4px 0 -4px 8px;
  border-radius: 2px;
  background-color: #4a6cf0;
  vertical-align: -6px;
`;

const SendButton = styled.button`
  display: grid;
  place-items: center;
  width: 55px;
  height: 55px;
  margin: 0 5px 6px 0;
  border-radius: 50%;
  background-color: #868d9b;
`;

// Menú flotante con las sugerencias para la palabra activa
const Suggestions = styled.div`
  position: absolute;
  left: 148px;
  bottom: calc(100% - 3px);
  display: flex;
  gap: 16px;
  padding: 23px 32px 24px;
  border-radius: 18px;
  background-color: #5f5f5f;
  box-shadow: 0 6px 24px rgba(0, 0, 0, 0.4);
`;

/*
  * Teclado
*/
const Keyboard = styled.section`
  display: flex;
  flex-direction: column;
  padding-top: 20px;
  background-color: var(--keyboard-color);
`;

const SearchBox = styled.label`
  display: flex;
  align-items: center;
  gap: 24px;
  height: 74px;
  margin: 0 16px;
  padding: 0 24px;
  border-radius: 25px;
  background-color: #4b4b4b;

  input {
    flex: 1;
    min-width: 0;
    outline: none;
    font-size: 32px;
    line-height: 40px;
  }

  input::placeholder {
    color: #a3a3a3;
    opacity: 1;
  }
`;

const GroupTitle = styled.h2`
  margin: 0;
  padding: 12px 24px 0;
  font-size: 26px;
  font-weight: 600;
  line-height: 36px;
  color: #8f8f8f;
`;

const EmojiGrid = styled.div`
  display: grid;
  grid-auto-flow: column;
  grid-auto-columns: 84px;
  grid-template-rows: repeat(5, 80px);
  padding-left: 10px;
  overflow: hidden;

  button {
    display: grid;
    place-items: center;
  }
`;

const CategoryBar = styled.div`
  display: grid;
  grid-template-columns: 117px 1fr 117px;
  align-items: center;
  margin-top: 18px;

  .abc-key {
    justify-self: start;
    padding-left: 30px;
    font-size: 28px;
    line-height: 60px;
    color: #e2e2e2;
  }

  .delete-key {
    justify-self: end;
    padding-right: 30px;
  }
`;

const CategoryList = styled.nav`
  display: flex;
  justify-content: space-between;
`;

const CategoryButton = styled.button`
  display: grid;
  place-items: center;
  width: 60px;
  height: 60px;
  border-radius: 50%;
  color: ${({ $active }) => ($active ? "#b5b5b9" : "var(--muted-color)")};
  background-color: ${({ $active }) => ($active ? "#505050" : "transparent")};
  --hole-color: ${({ $active }) => ($active ? "#505050" : "var(--keyboard-color)")};
`;

const SystemRow = styled.div`
  display: flex;
  justify-content: space-between;
  align-items: center;
  height: 96px;
  margin-top: 40px;
  padding: 0 67px 0 60px;
`;

const HomeBar = styled.div`
  width: 36%;
  height: 10px;
  margin: 8px auto 16px;
  border-radius: 5px;
  background-color: #fff;
`;

// Los iconos usan 'currentColor' y '--hole-color' para los recortes
const hole = "var(--hole-color)";

const categories = [
  {
    name: "Frequently used",
    icon: (
      <>
        <circle cx="16" cy="16" r="15" fill="none" stroke="currentColor" strokeWidth="2" />
        <path d="M16 4 V16 H8" fill="none" stroke="currentColor" strokeWidth="2" />
      </>
    ),
  },
  {
    name: "Smileys & People",
    icon: (
      <>
        <circle cx="16" cy="16" r="16" fill="currentColor" />
        <ellipse cx="11.3" cy="12" rx="1.7" ry="2.2" fill={hole} />
        <ellipse cx="20.7" cy="12" rx="1.7" ry="2.2" fill={hole} />
        <path d="M5.5 17.5 Q16 20 26.5 17.5 Q25 27.5 16 27.5 Q7 27.5 5.5 17.5Z" fill={hole} />
        <path d="M7.5 19.5 Q16 21.5 24.5 19.5 Q24 22 22.5 23 Q16 24.5 9.5 23 Q8 22 7.5 19.5Z" fill="currentColor" />
      </>
    ),
  },
  {
    name: "Animals & Nature",
    icon: (
      <>
        <circle cx="6.5" cy="6" r="6" fill="currentColor" />
        <circle cx="25.5" cy="6" r="6" fill="currentColor" />
        <path d="M16 2 Q26 2 28.5 11 Q29 15 31 17 Q34 23 29 27 Q26 30 22 30 Q19 32 16 32 Q13 32 10 30 Q6 30 3 27 Q-2 23 1 17 Q3 15 3.5 11 Q6 2 16 2Z" fill="currentColor" />
        <ellipse cx="9.5" cy="17" rx="1.8" ry="2.3" fill={hole} />
        <ellipse cx="22.5" cy="17" rx="1.8" ry="2.3" fill={hole} />
        <path d="M13 21 H19 Q19 24 16 24.5 Q13 24 13 21Z" fill={hole} />
        <path d="M16 24 V26 M12 27 Q14 28 16 26 Q18 28 20 27" fill="none" stroke={hole} strokeWidth="1.5" />
      </>
    ),
  },
  {
    name: "Food & Drink",
    icon: (
      <>
        <path d="M0 7 H17 L16 13 Q6 14 5 19 Q3 22 5 24 V32 H2Z" fill="currentColor" />
        <path d="M13.5 8 L15 2 L21 4" fill="none" stroke="currentColor" strokeWidth="1.8" />
        <path d="M6.5 20 Q8 14 19 14 Q30 14 31.5 20Z" fill="currentColor" />
        <rect x="5.5" y="21" width="27" height="6" rx="2.5" fill="currentColor" />
        <path d="M9 22 L18 25.5 L28 22" fill="none" stroke={hole} strokeWidth="1.2" />
        <path d="M6.5 28.5 H31 V30 Q31 32 28.5 32 H9 Q6.5 32 6.5 30Z" fill="currentColor" />
      </>
    ),
  },
  {
    name: "Activity",
    icon: (
      <>
        <circle cx="16" cy="16" r="15" fill={hole} stroke="currentColor" strokeWidth="2" />
        <path d="M4 6 L9 1 L16 0 L17 3 L12 7 L6 9Z M22 1 L28 5 L31 11 L26 10 L21 5Z M14 8 L19 5 L24 8 L24 13 L18 15 L13 12Z M1 11 L5 11 L8 15 L7 20 L3 23 L0 17Z M9 17 L13 14 L18 16 L19 21 L15 24 L10 22Z M25 14 L29 11 L32 15 L31 21 L27 22 L23 19Z M16 26 L21 22 L26 24 L25 29 L19 31 L16 30Z M5 24 L11 25 L14 30 L12 32 L6 29Z" fill="currentColor" />
      </>
    ),
  },
  {
    name: "Travel & Places",
    icon: (
      <>
        <path d="M1 30 V13 H8 V1 H20 V9 H31 V30" fill="none" stroke="currentColor" strokeWidth="2" />
        <path d="M11 4 H13 V6 H11Z M15 4 H17 V6 H15Z M11 8 H13 V10 H11Z M15 8 H17 V10 H15Z M4 16 H6 V18 H4Z M26 12 H28 V14 H26Z M26 16 H28 V18 H26Z M22 12 H24 V14 H22Z" fill="currentColor" />
        <path d="M5 21 L8 20 Q9 13 16 13 Q23 13 24 20 L27 21 V28 L26 32 H22 V29 H10 V32 H6 V29 L5 28Z" fill="currentColor" />
        <path d="M10 20 Q11 15.5 16 15.5 Q21 15.5 22 20Z" fill={hole} />
        <circle cx="9" cy="24.5" r="1.5" fill={hole} />
        <circle cx="23" cy="24.5" r="1.5" fill={hole} />
        <path d="M13 24.5 H19" stroke={hole} strokeWidth="1.5" />
      </>
    ),
  },
  {
    name: "Objects",
    icon: (
      <>
        <path d="M16 0 Q27 1 27.5 11 Q27.5 15 24 18 Q22 20 21.5 24 H10.5 Q10 20 8 18 Q4.5 15 4.5 11 Q5 1 16 0Z" fill="currentColor" />
        <path d="M12.5 14 L16 17 L19.5 14 M16 17 V24" fill="none" stroke={hole} strokeWidth="1.5" />
        <path d="M12 25 V30 Q12 31 13 31 H19 Q20 31 20 30 V25Z" fill="none" stroke="currentColor" strokeWidth="2" />
      </>
    ),
  },
  {
    name: "Symbols",
    icon: (
      <>
        <path d="M1 2 H15 M1 6 H15 M8 6 V15" fill="none" stroke="currentColor" strokeWidth="1.8" />
        <path d="M23.5 0 Q24 4 28 6 Q30 9 27 13 Q28 8 24 8 V12 Q22 16 19 15 Q16 13 19 11 L22 10 V0Z" fill="currentColor" />
        <text x="1" y="32" fontSize="19" fontFamily="Roboto, sans-serif" fill="currentColor">&amp;%</text>
      </>
    ),
  },
  {
    name: "Flags",
    icon: (
      <>
        <path d="M5.5 3 V31" stroke="currentColor" strokeWidth="2" />
        <path d="M5.5 4 Q12 2 17 4 Q22 5 27 3 V19 Q22 21 17 20 Q12 18 5.5 20Z" fill="currentColor" />
      </>
    ),
  },
];

// Cada columna va de arriba hacia abajo
const emojiColumns = [
  ["hushed face", "astonished face", "yawning face", "sleeping face", "drooling face"],
  ["sleepy face", "dizzy face", "zipper-mouth face", "woozy face", "nauseated face"],
  ["vomiting face", "sneezing face", "face with medical mask", "face with thermometer", "face with head-bandage"],
  ["money-mouth face", "cowboy hat face", "smiling face with horns", "angry face with horns", "ogre"],
  ["goblin", "clown", "pile of poo", "ghost", "skull"],
  ["skull and crossbones", "alien", "alien monster", "robot", "jack-o-lantern"],
  ["grinning cat", "grinning cat with smiling eyes", "cat with tears of joy", "smiling cat with heart-eyes", "cat with wry smile"],
  ["kissing cat", "weary cat", "crying cat", "pouting cat", "palms up together"],
  ["open hands", "raising hands", "clapping hands", "handshake", "thumbs up"],
  ["thumbs down", "oncoming fist", "raised fist", "left-facing fist", "right-facing fist"],
];

const EmojiKeyboard = () => {
  const [active, setActive] = useState("Smileys & People");

  return (
    <Keyboard>
      <SearchBox>
        <svg width="33" height="33" viewBox="0 0 33 33" fill="none" stroke="#a3a3a3" aria-hidden="true">
          <circle cx="13" cy="13" r="12" strokeWidth="2.4" />
          <path d="M22 22 L30 30" strokeWidth="3.6" strokeLinecap="round" />
        </svg>
        <input type="text" placeholder="Search Emoji" aria-label="Search Emoji" />
      </SearchBox>

      <GroupTitle>SMILEYS &amp; PEOPLE</GroupTitle>

      <EmojiGrid>
        {emojiColumns.flat().map((name) => (
          <button key={name} type="button" aria-label={name}>
            <Emoji name={name} />
          </button>
        ))}
      </EmojiGrid>

      <CategoryBar>
        <button type="button" className="abc-key">ABC</button>
        <CategoryList aria-label="Emoji categories">
          {categories.map(({ name, icon }) => (
            <CategoryButton key={name} type="button" aria-label={name} $active={active === name} onClick={() => setActive(name)}>
              <svg width="32" height="32" viewBox="0 0 32 32" overflow="visible" aria-hidden="true">{icon}</svg>
            </CategoryButton>
          ))}
        </CategoryList>
        <button type="button" className="delete-key" aria-label="Delete">
          <svg width="48" height="36" viewBox="0 0 48 36" fill="none" stroke="#e2e2e2" strokeLinecap="round" strokeLinejoin="round">
            <path d="M18 2.5 H40 Q45.5 2.5 45.5 8 V28 Q45.5 33.5 40 33.5 H18 Q16 33.5 14 31.5 L3 20 Q1.5 18 3 16 L14 4.5 Q16 2.5 18 2.5Z" strokeWidth="2.6" />
            <path d="M23 11.5 L35.5 24.5 M35.5 11.5 L23 24.5" strokeWidth="2.6" />
          </svg>
        </button>
      </CategoryBar>

      <SystemRow>
        <button type="button" aria-label="Next keyboard">
          <svg width="56" height="56" viewBox="0 0 56 56" fill="none" stroke="#fff" strokeWidth="2.6">
            <circle cx="28" cy="28" r="25.5" />
            <ellipse cx="28" cy="28" rx="12" ry="25.5" />
            <path d="M28 2 V54 M2 28 H54 M10 10 Q28 23 46 10 M10 46 Q28 33 46 46" />
          </svg>
        </button>
        <button type="button" aria-label="Dictate">
          <svg width="40" height="58" viewBox="0 0 40 58" fill="none" stroke="#fff" strokeWidth="3" strokeLinecap="round">
            <rect x="11.5" y="2" width="17" height="35" rx="8.5" />
            <path d="M3 23 V29 Q4 46 20 46 Q36 46 37 29 V23 M20 46 V55 M8 56 H32" />
          </svg>
        </button>
      </SystemRow>

      <HomeBar />
    </Keyboard>
  );
};

export default function App() {
  return (
    <Screen>
      <GlobalStyle />
      <GradientSheet />
      <StatusBar />
      <BackCard />

      <Sheet>
        <SheetHeader>
          <h1>New Message</h1>
          <button type="button">Cancel</button>
        </SheetHeader>

        <Recipient>
          To:
          <input type="text" />
        </Recipient>

        <Conversation />

        <Composer onSubmit={(e) => e.preventDefault()}>
          <AppsButton type="button" aria-label="Show apps">
            <svg width="20" height="30" viewBox="0 0 20 30" aria-hidden="true">
              <path d="M5 3 L16 15 L5 27" fill="none" stroke="#1c1c1c" strokeWidth="5" strokeLinecap="round" strokeLinejoin="round" />
            </svg>
          </AppsButton>

          <Bubble>
            <Suggestions role="menu">
              {["shallow pan of food", "bento box", "pot of food"].map((name) => (
                <button key={name} type="button" role="menuitem" aria-label={name}>
                  <Emoji name={name} />
                </button>
              ))}
            </Suggestions>

            <MessageText role="textbox" aria-label="Message" aria-multiline="true" contentEditable suppressContentEditableWarning>
              <svg width="35" height="42" viewBox="0 0 35 42" aria-hidden="true">{drawings.pizza}</svg>
              <Caret /> is a <mark>yummy food</mark> to have when it’s <mark>sunny</mark>
            </MessageText>

            <SendButton type="submit" aria-label="Send">
              <svg width="28" height="32" viewBox="0 0 28 32" aria-hidden="true">
                <path d="M14 29 V3 M4 13 L14 3 L24 13" fill="none" stroke="#1c1c1c" strokeWidth="4.6" strokeLinecap="round" strokeLinejoin="round" />
              </svg>
            </SendButton>
          </Bubble>
        </Composer>
      </Sheet>

      <EmojiKeyboard />
    </Screen>
  );
}
